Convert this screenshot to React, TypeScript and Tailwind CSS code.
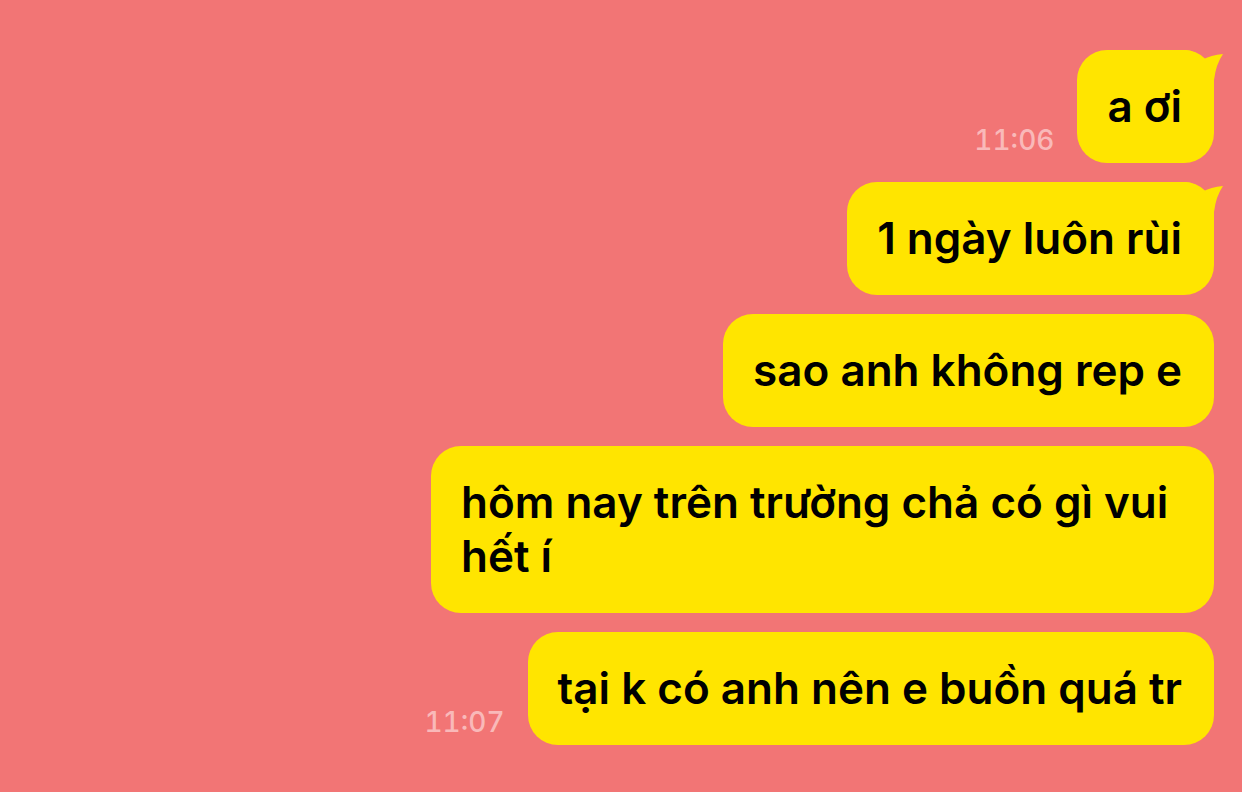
import React from 'react';

interface Message {
  text: string;
  time?: string;
  tail?: boolean;
}

const messages: Message[] = [
  { text: 'a ơi', time: '11:06', tail: true },
  { text: '1 ngày luôn rùi', tail: true },
  { text: 'sao anh không rep e' },
  { text: 'hôm nay trên trường chả có gì vui hết í' },
  { text: 'tại k có anh nên e buồn quá tr', time: '11:07' },
];

function Tail() {
  // little hook at the top right corner of the first bubbles in a group
  return (
    <svg
      className="absolute top-0 right-[-10px] pointer-events-none"
      width="44"
      height="40"
      viewBox="0 0 44 40"
    >
      <path
        d="M0 0 L6 0 Q17 1 22 10 Q31 5 43 4 Q36 14 34 30 L34 40 L0 40 Z"
        fill="#FFE500"
      />
    </svg>
  );
}

export default function App() {
  return (
    <main
      className="w-full h-[792px] bg-[#F27575] overflow-hidden pt-[50px] pr-[28px]"
      style={{ fontFamily: 'Inter, "Noto Sans", sans-serif' }}
    >
      <div className="flex flex-col items-end gap-[19px]">
        {messages.map((m, i) => (
          <div key={i} className="flex items-end justify-end gap-[23px]">
            {m.time && (
              <span className="text-[28px] leading-none font-medium tabular-nums text-[#F9B9B9] mb-[9px]">
                {m.time}
              </span>
            )}
            <div className="relative max-w-[783px] bg-[#FFE500] rounded-[30px] pl-[30px] pr-[32px] pt-[29px] pb-[30px] text-black text-[44px] leading-[54px] font-semibold">
              {m.tail && <Tail />}
              <span className="relative">{m.text}</span>
            </div>
          </div>
        ))}
      </div>
    </main>
  );
}
